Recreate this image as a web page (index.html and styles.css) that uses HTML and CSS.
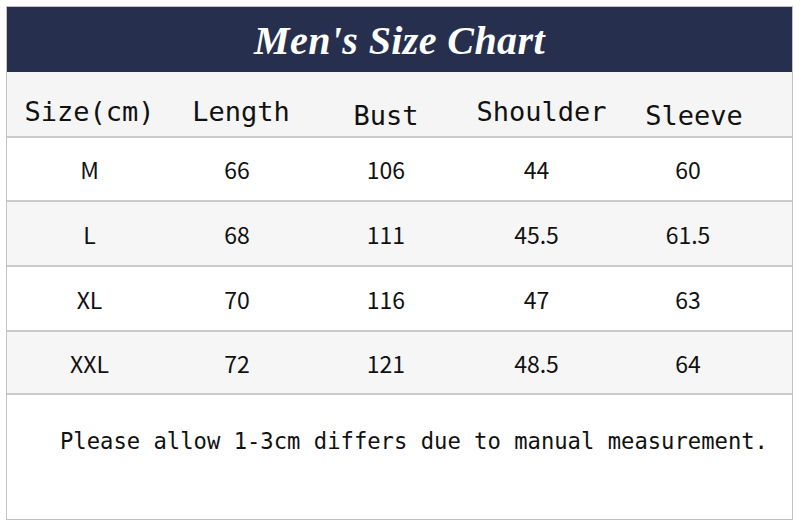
FILE: index.html
```html
<!DOCTYPE html>
<html>
<head>
<meta charset="utf-8">
<link rel="stylesheet" href="styles.css">
</head>
<body>
<div class="chart">
  <div class="title">Men's Size Chart</div>
  <div class="row head">
    <div class="cell">Size(cm)</div>
    <div class="cell">Length</div>
    <div class="cell low">Bust</div>
    <div class="cell">Shoulder</div>
    <div class="cell low">Sleeve</div>
  </div>
  <div class="row data">
    <div class="cell">M</div><div class="cell">66</div><div class="cell">106</div><div class="cell">44</div><div class="cell">60</div>
  </div>
  <div class="row data alt">
    <div class="cell">L</div><div class="cell">68</div><div class="cell">111</div><div class="cell">45.5</div><div class="cell">61.5</div>
  </div>
  <div class="row data">
    <div class="cell">XL</div><div class="cell">70</div><div class="cell">116</div><div class="cell">47</div><div class="cell">63</div>
  </div>
  <div class="row data alt last">
    <div class="cell">XXL</div><div class="cell">72</div><div class="cell">121</div><div class="cell">48.5</div><div class="cell">64</div>
  </div>
  <div class="note">Please allow 1-3cm differs due to manual measurement.</div>
</div>
</body>
</html>
```

FILE: styles.css
```css
html, body { margin: 0; padding: 0; background: #ffffff; }
body { padding: 6px; }
.chart {
  width: 785px;
  height: 512px;
  border: 1px solid #c3c3c3;
  display: flex;
  flex-direction: column;
  background: #fff;
}
.title {
  height: 65px;
  flex: none;
  background: #272f4e;
  color: #fff;
  font-family: "Liberation Serif", serif;
  font-weight: bold;
  font-style: italic;
  font-size: 40px;
  display: flex;
  align-items: center;
  justify-content: center;
  letter-spacing: 0.4px;
  padding-top: 2px;
  box-sizing: border-box;
}
.row {
  display: grid;
  flex: none;
  grid-template-columns: 147px 148px 150px 151px 152px;
  padding-left: 9px;
  border-bottom: 2px solid #cbcbcb;
  box-sizing: border-box;
}
.head {
  height: 66px;
  background: #f5f5f5;
  font-family: "DejaVu Sans Mono", monospace;
  font-size: 27px;
  color: #111;
}
.head .cell {
  display: flex;
  justify-content: center;
  align-items: flex-start;
  padding-top: 24px;
}
.head .cell:nth-child(2) { padding-left: 8px; }
.head .cell:nth-child(4) { padding-left: 10px; }
.head .cell:nth-child(5) { padding-left: 12px; }
.head .low { padding-top: 28px; }
.data {
  height: 65px;
  background: #fff;
  font-family: "Noto Sans CJK SC", "Noto Sans", sans-serif;
  font-size: 23px;
  color: #111;
}
.data:nth-child(3) { height: 64px; }
.data.last { height: 63px; }
.data.alt { background: #f6f6f6; }
.data .cell {
  display: flex;
  justify-content: center;
  align-items: center;
}
.note {
  flex: 1;
  font-family: "DejaVu Sans Mono", monospace;
  font-size: 22.2px;
  color: #111;
  padding-left: 53px;
  padding-top: 33px;
}
```
